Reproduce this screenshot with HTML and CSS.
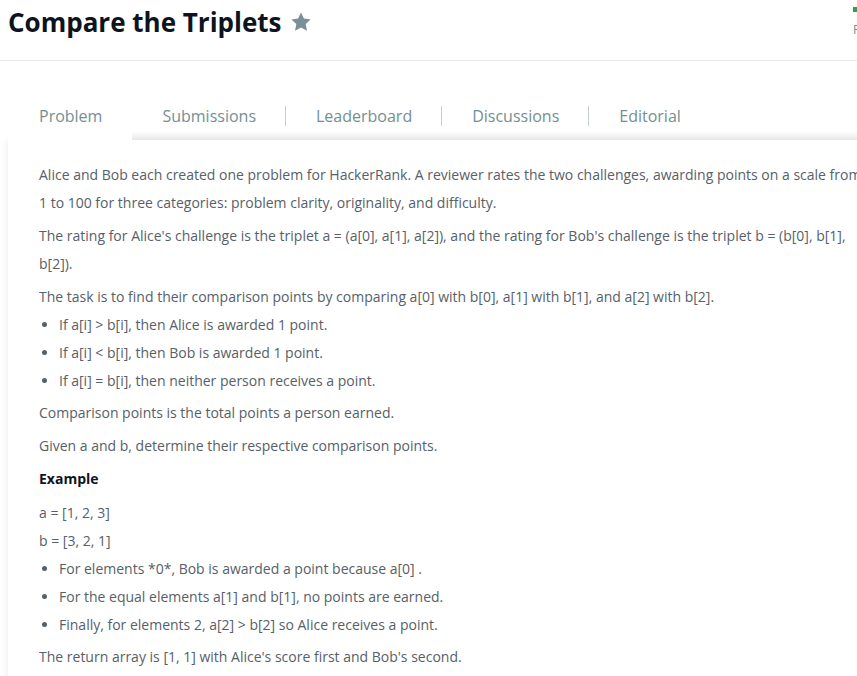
FILE: index.html
```html
<!DOCTYPE html>
<html>
<head>
<meta charset="utf-8">
<link rel="stylesheet" href="styles.css">
</head>
<body>
<header class="header">
  <div class="header-inner">
    <div class="title-wrap">
      <h1 class="title">Compare the Triplets</h1>
      <svg class="star" viewBox="0 0 24 24" width="22" height="22"><path d="M12 1.5l3.2 6.8 7.3.9-5.4 5 1.4 7.3L12 17.9l-6.5 3.6 1.4-7.3-5.4-5 7.3-.9z" fill="#7a8f96"/></svg>
    </div>
    <div class="side">
      <div class="side-bar"></div>
      <div class="side-text">Points</div>
    </div>
  </div>
</header>
<div class="page">
  <nav class="tabs">
    <div class="tab active">Problem</div>
    <div class="tab">Submissions</div>
    <div class="sep"></div>
    <div class="tab">Leaderboard</div>
    <div class="sep"></div>
    <div class="tab">Discussions</div>
    <div class="sep"></div>
    <div class="tab">Editorial</div>
  </nav>
  <main class="card">
    <p>Alice and Bob each created one problem for HackerRank. A reviewer rates the two challenges, awarding points on a scale from 1 to 100 for three categories: problem clarity, originality, and difficulty.</p>
    <p>The rating for Alice's challenge is the triplet a = (a[0], a[1], a[2]), and the rating for Bob's challenge is the triplet b = (b[0], b[1], b[2]).</p>
    <p class="tight">The task is to find their comparison points by comparing a[0] with b[0], a[1] with b[1], and a[2] with b[2].</p>
    <ul>
      <li>If a[i] &gt; b[i], then Alice is awarded 1 point.</li>
      <li>If a[i] &lt; b[i], then Bob is awarded 1 point.</li>
      <li>If a[i] = b[i], then neither person receives a point.</li>
    </ul>
    <p>Comparison points is the total points a person earned.</p>
    <p>Given a and b, determine their respective comparison points.</p>
    <p class="example"><strong>Example</strong></p>
    <p class="tight">a = [1, 2, 3]<br>b = [3, 2, 1]</p>
    <ul>
      <li>For elements *0*, Bob is awarded a point because a[0] .</li>
      <li>For the equal elements a[1] and b[1], no points are earned.</li>
      <li>Finally, for elements 2, a[2] &gt; b[2] so Alice receives a point.</li>
    </ul>
    <p>The return array is [1, 1] with Alice's score first and Bob's second.</p>
  </main>
</div>
</body>
</html>
```
FILE: styles.css
```css
html, body {
  margin: 0;
  padding: 0;
  background: #fff;
  overflow: hidden;
  font-family: "Open Sans", "Liberation Sans", sans-serif;
}
.header {
  height: 60px;
  border-bottom: 1px solid #e8e8e8;
}
.header-inner {
  display: grid;
  grid-template-columns: 845px 200px;
  padding: 0 8px;
  width: 1100px;
}
.title-wrap {
  display: flex;
  align-items: center;
  height: 44px;
}
.title {
  margin: 0;
  font-size: 26px;
  font-weight: 700;
  color: #0e141e;
  letter-spacing: 0;
}
.star {
  margin-left: 8px;
}
.side {
  padding-top: 7px;
}
.side-bar {
  width: 40px;
  height: 5px;
  background: #1ba94c;
}
.side-text {
  margin-top: 9px;
  font-size: 12px;
  color: #738f93;
}
.page {
  padding: 0 0 0 8px;
}
.tabs {
  display: flex;
  align-items: center;
  margin-top: 31px;
  height: 48px;
  background: linear-gradient(to bottom, #fff 0, #fff 38px, #f1f1f1 48px);
  width: 1200px;
}
.tab {
  padding: 0 29px 0 30px;
  height: 48px;
  line-height: 48px;
  font-size: 16px;
  color: #738f93;
}
.tab.active {
  background: #fff;
  padding: 0 30px 0 31px;
}
.sep {
  width: 1px;
  height: 20px;
  background: #c2cdd1;
}
.card {
  background: #fff;
  box-shadow: 0 0 8px rgba(0, 0, 0, 0.09);
  padding: 21px 31px 20px;
  width: 832px;
  font-size: 14px;
  line-height: 28px;
  color: #576068;
}
.card p {
  margin: 0 0 5px;
}
.card p.example {
  margin-bottom: 6px;
}
.card p.tight {
  margin-bottom: 0;
}
.card ul {
  margin: 0 0 4px;
  padding-left: 20px;
}
.card strong {
  color: #0e141e;
  font-weight: 700;
}
```
